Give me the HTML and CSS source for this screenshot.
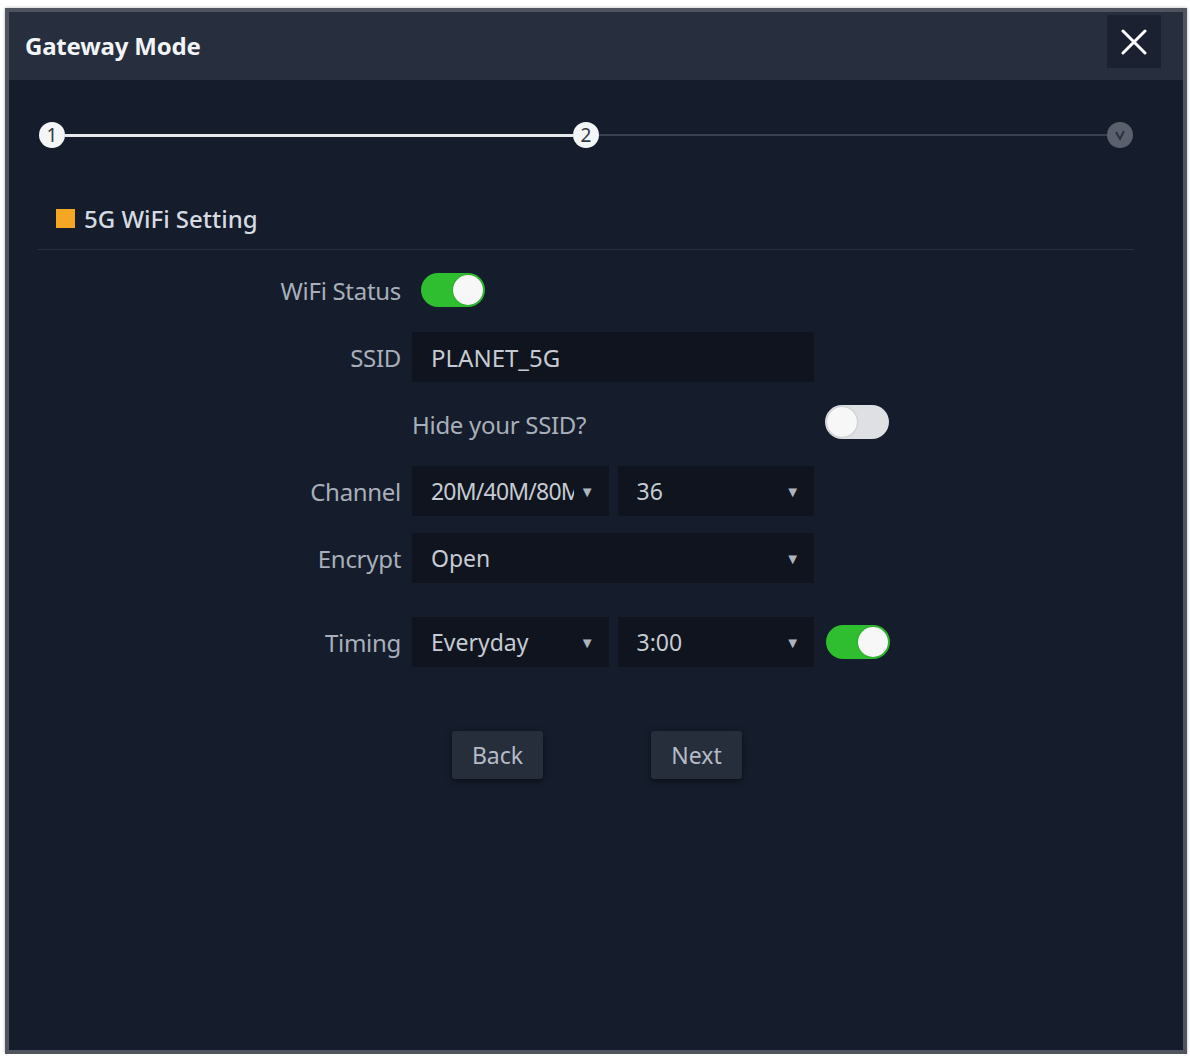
FILE: index.html
```html
<!DOCTYPE html>
<html lang="en">

<head>
    <meta charset="UTF-8">
    <title>Gateway Mode</title>
    <link rel="stylesheet" href="styles.css">
</head>

<body>
    <div class="dialog">
        <header class="dialog-head">
            <h1>Gateway Mode</h1>
            <button class="close-btn" aria-label="Close">
                <svg width="26" height="26" viewBox="0 0 26 26">
                    <path d="M2 2 L24 24 M24 2 L2 24" stroke="#fff" stroke-width="3" stroke-linecap="round" />
                </svg>
            </button>
        </header>

        <div class="stepper">
            <span class="step done">1</span>
            <span class="step-line done"></span>
            <span class="step done">2</span>
            <span class="step-line"></span>
            <span class="step todo">
                <svg width="14" height="14" viewBox="0 0 14 14">
                    <path d="M3 4 L7 11 L11 3" stroke="#2c3340" stroke-width="2" fill="none" />
                </svg>
            </span>
        </div>

        <div class="section">
            <h2 class="section-title"><span class="mark"></span>5G WiFi Setting</h2>
        </div>

        <div class="form">
            <div class="row">
                <label>WiFi Status</label>
                <div class="field">
                    <span class="switch on first"><span class="knob"></span></span>
                </div>
            </div>
            <div class="row">
                <label>SSID</label>
                <div class="field">
                    <div class="input">PLANET_5G</div>
                </div>
            </div>
            <div class="row">
                <label></label>
                <div class="field">
                    <span class="plain">Hide your SSID?</span>
                </div>
                <span class="switch off"><span class="knob"></span></span>
            </div>
            <div class="row">
                <label>Channel</label>
                <div class="field pair">
                    <div class="select"><span class="val clip">20M/40M/80M</span><span class="arrow">▼</span></div>
                    <div class="select"><span class="val">36</span><span class="arrow">▼</span></div>
                </div>
            </div>
            <div class="row">
                <label>Encrypt</label>
                <div class="field">
                    <div class="select"><span class="val">Open</span><span class="arrow">▼</span></div>
                </div>
            </div>
            <div class="row timing">
                <label>Timing</label>
                <div class="field pair">
                    <div class="select"><span class="val">Everyday</span><span class="arrow">▼</span></div>
                    <div class="select"><span class="val">3:00</span><span class="arrow">▼</span></div>
                </div>
                <span class="switch on"><span class="knob"></span></span>
            </div>
        </div>

        <div class="actions">
            <button class="btn">Back</button>
            <button class="btn">Next</button>
        </div>
    </div>
</body>

</html>
```

FILE: styles.css
```css
body {
    margin: 0;
    background-color: #fff;
    font-family: "Noto Sans", "Open Sans", sans-serif;
}

.dialog {
    margin: 8px 3px 0 5px;
    height: 1038px;
    border: 4px solid #4f545e;
    background-color: #151c2b;
    box-shadow: 0 0 3px rgba(0, 0, 0, 0.3);
}

.dialog-head {
    display: flex;
    justify-content: space-between;
    align-items: flex-start;
    height: 68px;
    padding: 0 22px 0 16px;
    background-color: #272e3d;
}

.dialog-head h1 {
    margin: 0;
    line-height: 68px;
    font-size: 24px;
    font-weight: bold;
    color: #f2f4f7;
    letter-spacing: -0.2px;
}

.close-btn {
    width: 54px;
    height: 53px;
    margin-top: 3px;
    border: none;
    background-color: #1b2130;
    display: flex;
    align-items: center;
    justify-content: center;
    padding: 0;
}

.stepper {
    display: flex;
    align-items: center;
    padding: 42px 50px 0 30px;
}

.step {
    width: 26px;
    height: 26px;
    border-radius: 50%;
    display: flex;
    align-items: center;
    justify-content: center;
    font-size: 19px;
    color: #333a44;
    flex-shrink: 0;
}

.step.done {
    background-color: #f4f5f7;
}

.step.todo {
    background-color: #5a606c;
}

.step-line {
    flex: 1;
    height: 2px;
    background-color: #394050;
}

.step-line.done {
    height: 3px;
    background-color: #e6e8ec;
}

.section {
    margin: 52px 49px 0 29px;
    border-bottom: 1px solid #293040;
    padding: 0 0 13px 18px;
}

.section-title {
    margin: 0;
    display: flex;
    align-items: center;
    font-size: 24px;
    font-weight: 500;
    color: #d6dae1;
    height: 36px;
}

.mark {
    width: 19px;
    height: 19px;
    background-color: #f5a623;
    margin-right: 9px;
}

.form {
    display: flex;
    flex-direction: column;
    gap: 17px;
    padding-top: 15px;
}

.row {
    display: grid;
    grid-template-columns: 392px 402px 64px;
    column-gap: 11px;
    align-items: center;
    height: 50px;
}

.row.timing {
    margin-top: 17px;
}

.row label {
    text-align: right;
    font-size: 24px;
    color: #a8afba;
    letter-spacing: -0.3px;
}

.field {
    display: flex;
    align-items: center;
}

.field.pair {
    gap: 9px;
}

.plain {
    font-size: 24px;
    color: #a8afba;
    letter-spacing: -0.3px;
}

.input,
.select {
    height: 50px;
    width: 100%;
    box-sizing: border-box;
    background-color: #0f141e;
    color: #c6cbd3;
    font-size: 23px;
    display: flex;
    align-items: center;
    padding: 0 14px 0 19px;
}

.input {
    font-size: 24px;
}

.select {
    justify-content: space-between;
}

.clip {
    width: 143px;
    overflow: hidden;
    white-space: nowrap;
    letter-spacing: -0.8px;
}

.arrow {
    font-size: 15px;
    color: #aeb4bd;
}

.switch {
    position: relative;
    display: inline-block;
    width: 64px;
    height: 34px;
    border-radius: 17px;
}

.switch.first {
    margin-left: 9px;
}

.switch.on {
    background-color: #2fbe2f;
}

.switch.off {
    background-color: #dfe0e3;
    margin-top: -4px;
}

.knob {
    position: absolute;
    top: 2px;
    width: 30px;
    height: 30px;
    border-radius: 50%;
    background-color: #f7f7f7;
    box-shadow: 0 0 2px rgba(0, 0, 0, 0.25);
}

.switch.on .knob {
    right: 2px;
}

.switch.off .knob {
    left: 2px;
}

.timing .switch {
    margin-left: 1px;
}

.actions {
    display: flex;
    justify-content: center;
    gap: 108px;
    margin-top: 64px;
    padding-left: 2px;
}

.btn {
    width: 91px;
    height: 48px;
    border: none;
    border-radius: 3px;
    background-color: #262e3c;
    color: #b5bbc5;
    font-family: "Noto Sans", sans-serif;
    font-size: 23px;
    box-shadow: 0 2px 6px rgba(0, 0, 0, 0.5);
}
```
